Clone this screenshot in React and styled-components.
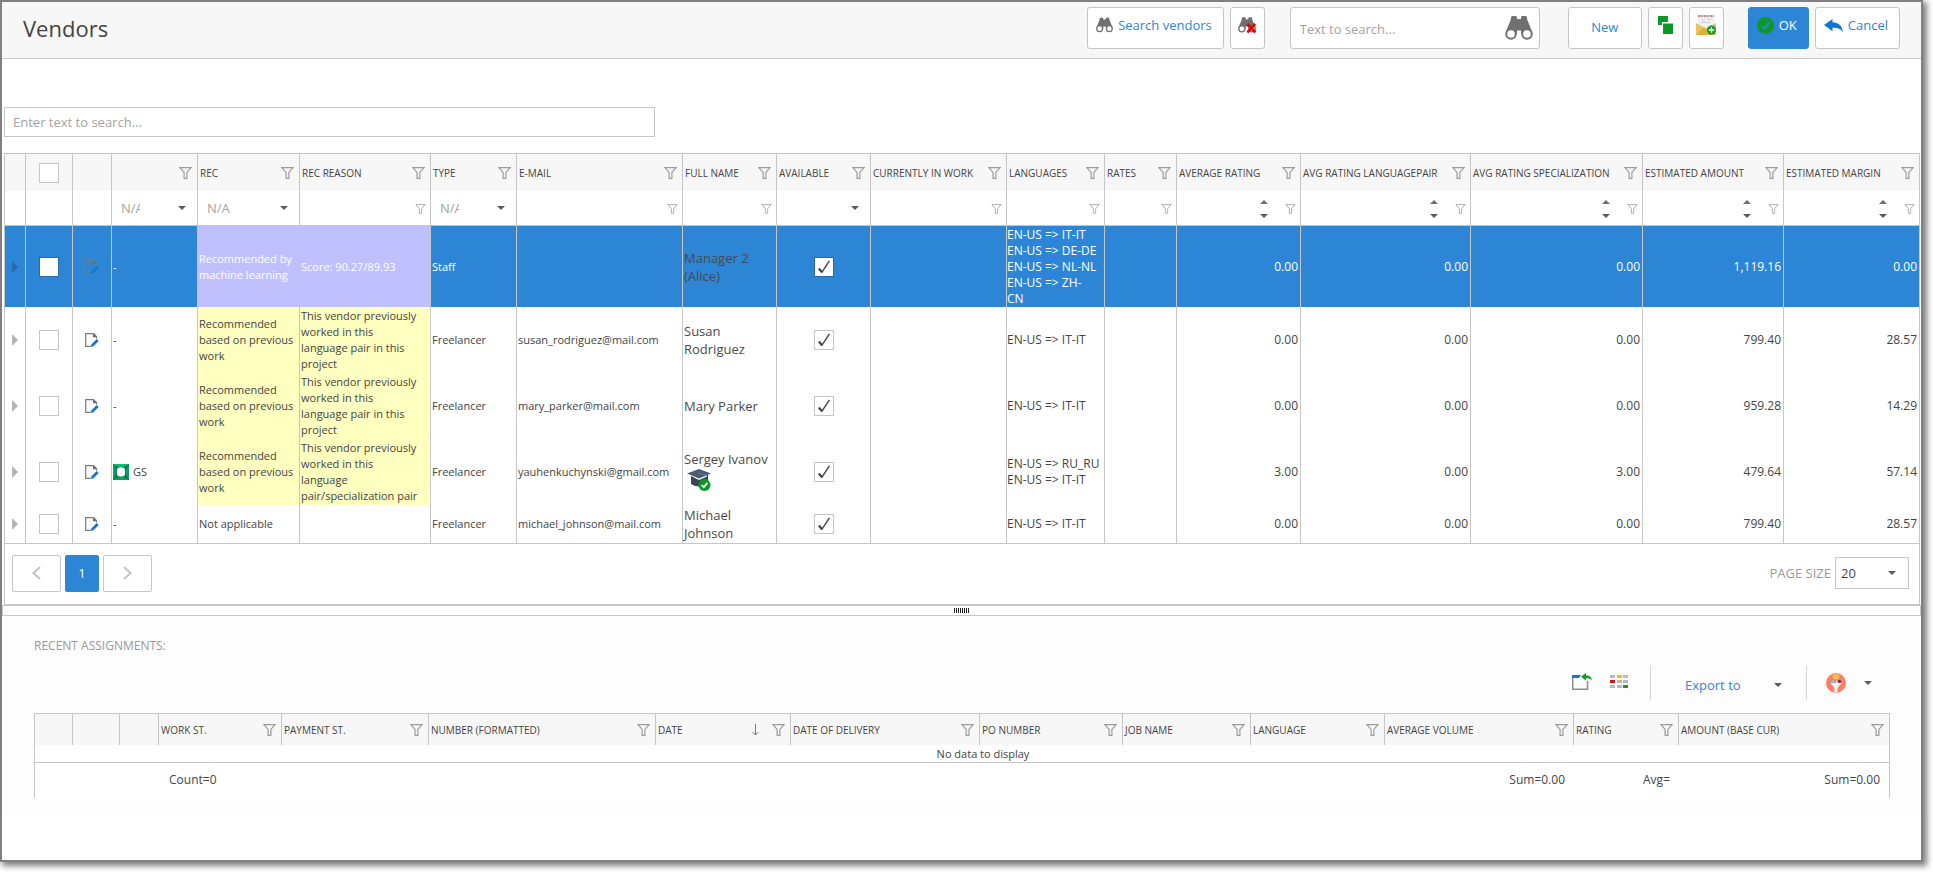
import React from "react";
import styled, { createGlobalStyle, css } from "styled-components";

const blue = "#2c86d5";
const line = "#c6c6c6";

// width, title, filter editor and alignment of every vendor column
const vendorColumns = [
  { width: 21, key: "expand" },
  { width: 47, key: "check" },
  { width: 39, key: "edit" },
  { width: 86, key: "status", title: "", filter: "select" },
  { width: 102, key: "rec", title: "REC", filter: "select" },
  { width: 131, key: "reason", title: "REC REASON", filter: "text" },
  { width: 86, key: "type", title: "TYPE", filter: "select" },
  { width: 166, key: "email", title: "E-MAIL", filter: "text" },
  { width: 94, key: "name", title: "FULL NAME", filter: "text" },
  { width: 94, key: "available", title: "AVAILABLE", filter: "blank" },
  { width: 136, key: "work", title: "CURRENTLY IN WORK", filter: "text" },
  { width: 98, key: "languages", title: "LANGUAGES", filter: "text" },
  { width: 72, key: "rates", title: "RATES", filter: "text" },
  { width: 124, key: "rating", title: "AVERAGE RATING", filter: "number" },
  { width: 170, key: "pair", title: "AVG RATING LANGUAGEPAIR", filter: "number" },
  { width: 172, key: "spec", title: "AVG RATING SPECIALIZATION", filter: "number" },
  { width: 141, key: "amount", title: "ESTIMATED AMOUNT", filter: "number" },
  { width: 136, key: "margin", title: "ESTIMATED MARGIN", filter: "number" },
];

const previousWork = ["Recommended", "based on previous", "work"];

const vendors = [
  {
    selected: true,
    height: 81,
    rec: ["Recommended by", "machine learning"],
    reason: ["Score: 90.27/89.93"],
    type: "Staff",
    email: "",
    name: ["Manager 2", "(Alice)"],
    languages: [
      "EN-US => IT-IT",
      "EN-US => DE-DE",
      "EN-US => NL-NL",
      "EN-US => ZH-",
      "CN",
    ],
    numbers: ["0.00", "0.00", "0.00", "1,119.16", "0.00"],
  },
  {
    height: 66,
    rec: previousWork,
    reason: [
      "This vendor previously",
      "worked in this",
      "language pair in this",
      "project",
    ],
    type: "Freelancer",
    email: "susan_rodriguez@mail.com",
    name: ["Susan", "Rodriguez"],
    languages: ["EN-US => IT-IT"],
    numbers: ["0.00", "0.00", "0.00", "799.40", "28.57"],
  },
  {
    height: 66,
    rec: previousWork,
    reason: [
      "This vendor previously",
      "worked in this",
      "language pair in this",
      "project",
    ],
    type: "Freelancer",
    email: "mary_parker@mail.com",
    name: ["Mary Parker"],
    languages: ["EN-US => IT-IT"],
    numbers: ["0.00", "0.00", "0.00", "959.28", "14.29"],
  },
  {
    height: 66,
    badge: "GS",
    rec: previousWork,
    reason: [
      "This vendor previously",
      "worked in this",
      "language",
      "pair/specialization pair",
    ],
    type: "Freelancer",
    email: "yauhenkuchynski@gmail.com",
    name: ["Sergey Ivanov"],
    certified: true,
    languages: ["EN-US => RU_RU", "EN-US => IT-IT"],
    numbers: ["3.00", "0.00", "3.00", "479.64", "57.14"],
  },
  {
    height: 39,
    plain: true,
    rec: ["Not applicable"],
    reason: [],
    type: "Freelancer",
    email: "michael_johnson@mail.com",
    name: ["Michael", "Johnson"],
    languages: ["EN-US => IT-IT"],
    numbers: ["0.00", "0.00", "0.00", "799.40", "28.57"],
  },
];

const assignmentColumns = [
  { width: 38 },
  { width: 47 },
  { width: 39 },
  { width: 123, title: "WORK ST.", total: "Count=0", left: true },
  { width: 147, title: "PAYMENT ST." },
  { width: 227, title: "NUMBER (FORMATTED)" },
  { width: 135, title: "DATE", sorted: true },
  { width: 189, title: "DATE OF DELIVERY" },
  { width: 143, title: "PO NUMBER" },
  { width: 128, title: "JOB NAME" },
  { width: 134, title: "LANGUAGE" },
  { width: 189, title: "AVERAGE VOLUME", total: "Sum=0.00" },
  { width: 105, title: "RATING", total: "Avg=" },
  { width: 211, title: "AMOUNT (BASE CUR)", total: "Sum=0.00" },
];

/* ---------- icons ---------- */

const FunnelIcon = ({ small }) => (
  <svg
    width={small ? 11 : 13}
    height={small ? 10 : 12}
    viewBox="0 0 13 12"
    fill="none"
    stroke={small ? "#b0b0b0" : "#9c9c9c"}
    strokeWidth="1.2"
  >
    <path d="M0.9 0.7H12.1L7.9 5.4V11.3H5.1V5.4Z" />
  </svg>
);

const CaretIcon = () => (
  <svg width="8" height="4" viewBox="0 0 8 4" fill="#5c5c5c">
    <path d="M0 0H8L4 4Z" />
  </svg>
);

const CaretUpIcon = () => (
  <svg width="8" height="4" viewBox="0 0 8 4" fill="#6e6e6e">
    <path d="M4 0L8 4H0Z" />
  </svg>
);

const BinocularsIcon = ({ width, height, crossed }) => (
  <svg width={width} height={height} viewBox="0 0 28 24">
    <path
      d="M6 1.5Q6 0 7.5 0H10.500Q12 0 12 1.500V3H16V1.500Q16 0 17.500 0H20.500Q22 0 22 1.500V3L27 15.500V18H16V14.500H12V18H1V15.500L6 3Z"
      fill="#707070"
    />
    <circle cx="6" cy="18" r="4.800" fill="#fff" stroke="#707070" strokeWidth="2" />
    <circle cx="22" cy="18" r="4.800" fill="#fff" stroke="#707070" strokeWidth="2" />
    {crossed && (
      <path d="M14.500 10.500L27 23.500M27 10.500L14.500 23.500" stroke="#e80000" strokeWidth="4.200" />
    )}
  </svg>
);

const CopyIcon = () => (
  <svg width="15" height="18" viewBox="0 0 15 18" fill="#0a9a24">
    <path d="M0 0H10V6H4V9H0Z" />
    <path d="M5 7.500H15V18H5Z" />
  </svg>
);

const MailAddIcon = () => (
  <svg width="20" height="20" viewBox="0 0 20 20">
    <path d="M2 2H18V14H2Z" fill="#f1f1f1" />
    <path d="M2 1H18" stroke="#e8523f" strokeWidth="1.600" strokeDasharray="2.500 3.500" />
    <path d="M5 1H18" stroke="#4aa3dc" strokeWidth="1.600" strokeDasharray="2.500 3.500" />
    <path d="M5 5H9M11 4.500H15M5 7.500H14" stroke="#cfcfcf" />
    <path d="M0 8L10 13.500L20 8V20H0Z" fill="#eec35c" />
    <path d="M0 20L8 12.500L10 13.500L18 20Z" fill="#e2ae3e" />
    <circle cx="15.500" cy="15" r="4.500" fill="#0a9a24" />
    <path d="M15.500 12.200V17.800M12.700 15H18.300" stroke="#fff" strokeWidth="1.400" />
  </svg>
);

const OkIcon = () => (
  <svg width="17" height="17" viewBox="0 0 17 17">
    <circle cx="8.500" cy="8.500" r="8.500" fill="#0a9a24" />
    <path d="M4.500 8.700L7.400 11.500L12.400 5.700" fill="none" stroke={blue} strokeWidth="2.200" />
  </svg>
);

const BackIcon = () => (
  <svg width="19" height="13" viewBox="0 0 19 13" fill="#1176d6">
    <path d="M8.500 0V3.300C14.500 3.500 18 6.500 19 13C16.500 9.600 13.500 8.600 8.500 8.700V12.200L0 6.100Z" />
  </svg>
);

const EditIcon = () => (
  <svg width="14" height="14" viewBox="0 0 14 14">
    <path
      d="M11.500 5.500V3.500L8.500 0.700H0.700V13.300H5.500"
      fill="none"
      stroke="#7a7a7a"
      strokeWidth="1.200"
    />
    <path d="M8 0.500L12 4.300H8Z" fill="#6a6a6a" />
    <path d="M5.500 14L6.300 11L8.600 13.200Z" fill="#1176d6" />
    <path d="M7.500 12.200L12.700 7" stroke="#1176d6" strokeWidth="2.800" />
  </svg>
);

const ExpandIcon = ({ dark }) => (
  <svg width="6" height="12" viewBox="0 0 6 12" fill={dark ? "#296aa6" : "#b4b4b4"}>
    <path d="M0 0L6 6L0 12Z" />
  </svg>
);

const TickIcon = () => (
  <svg width="12" height="14" viewBox="0 0 12 14" fill="none" stroke="#444">
    <path d="M0.800 8.600L4 12.200" strokeWidth="2.200" />
    <path d="M3.700 12.600L11.400 0.800" strokeWidth="1.400" />
  </svg>
);

const GradeIcon = () => (
  <svg width="16" height="16" viewBox="0 0 16 16">
    <rect width="16" height="16" fill="#0a9f63" />
    <path d="M0 0L8 4L16 0L12 8L16 16L8 12L0 16L4 8Z" fill="#0b7d4d" />
    <path d="M0 0L8 4L16 0Z" fill="#0fb874" />
    <rect x="4" y="3.500" width="8" height="9" rx="3" fill="#fff" />
  </svg>
);

const GraduateIcon = () => (
  <svg width="24" height="22" viewBox="0 0 24 22">
    <path d="M4 7L12 11L21 7V15Q12 20 4 15Z" fill="#3b4754" />
    <path d="M0 4.500L12 0L24 4.500L12 9.500Z" fill="#4e5b69" />
    <path d="M11 4L20 6" stroke="#2c86d5" strokeWidth="1.200" />
    <path d="M20.500 6V11" stroke="#3b4754" strokeWidth="1.200" />
    <circle cx="17.500" cy="16" r="6" fill="#0a9a24" />
    <path d="M14.700 16.200L16.800 18.200L20.500 13.800" fill="none" stroke="#fff" strokeWidth="1.800" />
  </svg>
);

const ChevronIcon = ({ next }) => (
  <svg width="9" height="14" viewBox="0 0 9 14" fill="none" stroke="#c4c4c4" strokeWidth="2">
    <path d={next ? "M1 1L7.500 7L1 13" : "M8 1L1.500 7L8 13"} />
  </svg>
);

const SortIcon = () => (
  <svg width="7" height="12" viewBox="0 0 7 12" fill="none" stroke="#777">
    <path d="M3.500 0V11M0.700 8L3.500 11L6.300 8" />
  </svg>
);

const OpenWindowIcon = () => (
  <svg width="20" height="18" viewBox="0 0 20 18">
    <path d="M0 2H9L7 5H0Z" fill="#1176d6" />
    <path d="M0.700 5V16.300H15.500V8" fill="none" stroke="#8b8b8b" strokeWidth="1.500" />
    <path d="M14 0V2.200C17.500 2.300 19.500 4 20 7.500C18.500 5.700 17 5.200 14 5.200V7.500L9 3.700Z" fill="#0a9a24" />
  </svg>
);

const ColumnsIcon = () => (
  <svg width="18" height="14" viewBox="0 0 18 14" fill="#b9b9b9">
    <rect width="5" height="3" />
    <rect x="7" width="5" height="3" fill="#fdb515" />
    <rect x="13" width="5" height="3" />
    <rect y="5" width="5" height="3" fill="#cf1417" />
    <rect x="7" y="5" width="5" height="3" />
    <rect x="13" y="5" width="5" height="3" />
    <rect y="10" width="5" height="3" />
    <rect x="7" y="10" width="5" height="3" />
    <rect x="13" y="10" width="5" height="3" fill="#0a9a24" />
  </svg>
);

const DataFilterIcon = () => (
  <svg width="20" height="20" viewBox="0 0 20 20">
    <circle cx="10" cy="10" r="10" fill="#ff7f66" />
    <path d="M4.500 10H15.500L11.500 15V19L8.500 20V15Z" fill="#f4f4f4" />
    <circle cx="10" cy="3.500" r="3.300" fill="#fbb946" />
    <path d="M5 10Q5 7 8 7L9.500 10Z" fill="#62c9ee" />
    <path d="M9.500 10L11 7L12 10Z" fill="#e8e8e8" />
    <circle cx="13.500" cy="8.300" r="1.600" fill="#39455a" />
  </svg>
);

/* ---------- small parts ---------- */

const Lines = ({ items }) =>
  items.map((text, i) => (
    <React.Fragment key={i}>
      {i > 0 && <br />}
      {text}
    </React.Fragment>
  ));

const CheckBox = ({ label, checked, selected }) => (
  <CheckWrap>
    <CheckInput
      type="checkbox"
      aria-label={label}
      defaultChecked={checked}
      $selected={selected}
    />
    {checked && <TickIcon />}
  </CheckWrap>
);

const HeaderCell = ({ column, table }) => (
  <HeadCell scope="col">
    {column.title !== undefined && (
      <HeadContent>
        <HeadTitle>{column.title}</HeadTitle>
        {column.sorted && <SortIcon />}
        <IconButton aria-label={`Filter ${table} ${column.title}`}>
          <FunnelIcon />
        </IconButton>
      </HeadContent>
    )}
  </HeadCell>
);

const FilterEditor = ({ column }) => {
  const label = `${column.title} filter`;
  if (column.filter === "select" || column.filter === "blank") {
    return (
      <SelectWrap>
        <FilterSelect aria-label={label}>
          <option>{column.filter === "select" ? "N/A" : ""}</option>
        </FilterSelect>
        <CaretIcon />
      </SelectWrap>
    );
  }
  return (
    <FilterBox>
      <FilterInput type="text" aria-label={label} />
      {column.filter === "number" && (
        <Spinner>
          <IconButton aria-label={`Increase ${label}`}>
            <CaretUpIcon />
          </IconButton>
          <IconButton aria-label={`Decrease ${label}`}>
            <CaretIcon />
          </IconButton>
        </Spinner>
      )}
      <IconButton aria-label={`${label} condition`}>
        <FunnelIcon small />
      </IconButton>
    </FilterBox>
  );
};

const VendorRow = ({ vendor }) => {
  const { selected, plain } = vendor;
  const tint = plain ? "none" : selected ? "#c0c0ff" : "#ffffc0";
  const who = vendor.name.join(" ");
  return (
    <Row $selected={selected} $height={vendor.height}>
      <Cell $center>
        <IconButton aria-label={`Expand ${who}`}>
          <ExpandIcon dark={selected} />
        </IconButton>
      </Cell>
      <Cell $center>
        <CheckBox label={`Select ${who}`} selected={selected} />
      </Cell>
      <Cell $center>
        <IconButton aria-label={`Edit ${who}`}>
          <EditIcon />
        </IconButton>
      </Cell>
      <Cell>
        {vendor.badge ? (
          <Badge>
            <GradeIcon />
            {vendor.badge}
          </Badge>
        ) : (
          "-"
        )}
      </Cell>
      <Cell $tint={tint}>
        <Lines items={vendor.rec} />
      </Cell>
      <Cell $tint={tint}>
        <Lines items={vendor.reason} />
      </Cell>
      <Cell>{vendor.type}</Cell>
      <Cell>{vendor.email}</Cell>
      <NameCell>
        <Lines items={vendor.name} />
        {vendor.certified && (
          <Certificate>
            <GraduateIcon />
          </Certificate>
        )}
      </NameCell>
      <Cell $center>
        <CheckBox label={`${who} available`} checked selected={selected} />
      </Cell>
      <Cell />
      <LanguageCell>
        <Lines items={vendor.languages} />
      </LanguageCell>
      <Cell />
      {vendor.numbers.map((value, i) => (
        <NumberCell key={i}>{value}</NumberCell>
      ))}
    </Row>
  );
};

export default function App() {
  return (
    <>
      <GlobalStyle />
      <Window>
        <TopBar>
          <Title>Vendors</Title>
          <Group>
            <Button>
              <BinocularsIcon width={17} height={16} />
              Search vendors
            </Button>
            <Button $square aria-label="Clear vendor search">
              <BinocularsIcon width={18} height={16} crossed />
            </Button>
          </Group>
          <SearchBox>
            <SearchInput aria-label="Search" placeholder="Text to search..." />
            <IconButton aria-label="Run search">
              <BinocularsIcon width={28} height={24} />
            </IconButton>
          </SearchBox>
          <Group>
            <Button $wide>New</Button>
            <Button $square aria-label="Copy">
              <CopyIcon />
            </Button>
            <Button $square aria-label="New mail">
              <MailAddIcon />
            </Button>
          </Group>
          <Group>
            <Button $primary>
              <OkIcon />
              OK
            </Button>
            <Button>
              <BackIcon />
              Cancel
            </Button>
          </Group>
        </TopBar>

        <Main>
          <GridSearch aria-label="Search in list" placeholder="Enter text to search..." />
          <Panel>
            <Table>
              <colgroup>
                {vendorColumns.map((c) => (
                  <Col key={c.key} $width={c.width} />
                ))}
              </colgroup>
              <thead>
                <HeadRow $height={37}>
                  {vendorColumns.map((c) =>
                    c.key === "check" ? (
                      <CheckHeadCell key={c.key} scope="col">
                        <CheckBox label="Select all" />
                      </CheckHeadCell>
                    ) : (
                      <HeaderCell key={c.key} column={c} table="vendors" />
                    )
                  )}
                </HeadRow>
                <FilterRow>
                  {vendorColumns.map((c) => (
                    <FilterCell key={c.key}>
                      {c.filter && <FilterEditor column={c} />}
                    </FilterCell>
                  ))}
                </FilterRow>
              </thead>
              <tbody>
                {vendors.map((v) => (
                  <VendorRow key={v.name[0]} vendor={v} />
                ))}
              </tbody>
            </Table>
            <Pager>
              <PageButton aria-label="Previous page">
                <ChevronIcon />
              </PageButton>
              <PageButton $current>1</PageButton>
              <PageButton aria-label="Next page">
                <ChevronIcon next />
              </PageButton>
              <PageLabel htmlFor="page-size">PAGE SIZE</PageLabel>
              <PageSizeWrap>
                <PageSize id="page-size">
                  <option>20</option>
                </PageSize>
                <CaretIcon />
              </PageSizeWrap>
            </Pager>
          </Panel>
        </Main>

        <Splitter>
          <Grip />
        </Splitter>

        <Recent>
          <RecentTitle>RECENT ASSIGNMENTS:</RecentTitle>
          <Tools>
            <ToolSet>
              <IconButton aria-label="Open in window">
                <OpenWindowIcon />
              </IconButton>
              <IconButton aria-label="Choose columns">
                <ColumnsIcon />
              </IconButton>
            </ToolSet>
            <ExportButton>
              Export to
              <CaretIcon />
            </ExportButton>
            <FilterMenu aria-label="Saved filters">
              <DataFilterIcon />
              <CaretIcon />
            </FilterMenu>
          </Tools>
          <AssignmentPanel>
            <Table>
              <colgroup>
                {assignmentColumns.map((c, i) => (
                  <Col key={i} $width={c.width} />
                ))}
              </colgroup>
              <thead>
                <HeadRow $height={31}>
                  {assignmentColumns.map((c, i) => (
                    <HeaderCell key={i} column={c} table="assignments" />
                  ))}
                </HeadRow>
              </thead>
              <tbody>
                <tr>
                  <EmptyCell colSpan={assignmentColumns.length}>
                    No data to display
                  </EmptyCell>
                </tr>
              </tbody>
              <tfoot>
                <tr>
                  {assignmentColumns.map((c, i) => (
                    <TotalCell key={i} $left={c.left}>
                      {c.total}
                    </TotalCell>
                  ))}
                </tr>
              </tfoot>
            </Table>
          </AssignmentPanel>
        </Recent>
      </Window>
    </>
  );
}

/* ---------- styles ---------- */

const GlobalStyle = createGlobalStyle`
  * {
    box-sizing: border-box;
  }

  body {
    margin: 0;
    background: white;
    color: #444;
    font-family: "Open Sans", "Noto Sans", sans-serif;
    font-size: 11px;
    line-height: 16px;
  }

  button, input, select {
    font-family: inherit;
    color: inherit;
  }

  svg {
    display: block;
    flex: none;
  }
`;

const Window = styled.div`
  min-height: calc(100vh - 10px);
  margin: 0 10px 10px 0;
  border: 2px solid #808080;
  box-shadow: 3px 3px 6px 1px rgba(0, 0, 0, 0.5);
  background: white;
`;

const TopBar = styled.header`
  display: flex;
  align-items: flex-start;
  height: 57px;
  padding: 5px 21px 0 21px;
  border-bottom: 1px solid ${line};
  background: #f7f7f7;
`;

const Title = styled.h1`
  flex: 1;
  margin: 0;
  font-size: 22px;
  font-weight: 400;
  line-height: 42px;
`;

const Group = styled.div`
  display: flex;
  gap: 6px;
`;

const Button = styled.button`
  display: flex;
  align-items: center;
  justify-content: center;
  gap: 5px;
  height: 42px;
  padding: 0 11px 6px 8px;
  border: 1px solid ${line};
  border-radius: 3px;
  background: white;
  color: ${blue};
  font-size: 13px;
  line-height: 20px;

  ${(props) =>
    props.$square &&
    css`
      width: 35px;
      padding: 0 0 6px;
    `}
  ${(props) =>
    props.$wide &&
    css`
      width: 74px;
      padding: 0 0 2px;
    `}
  ${(props) =>
    props.$primary &&
    css`
      border-color: ${blue};
      background: ${blue};
      color: white;
    `}
`;

const IconButton = styled.button`
  padding: 0;
  border: 0;
  background: none;
`;

const SearchBox = styled.div`
  display: flex;
  align-items: center;
  width: 250px;
  height: 42px;
  margin: 0 28px 0 25px;
  padding: 0 6px 0 9px;
  border: 1px solid ${line};
  border-radius: 3px;
  background: white;

  & + ${Group} {
    margin-right: 24px;
  }
`;

const inputText = css`
  border: 0;
  outline: 0;
  background: none;
  font-size: 13px;

  &::placeholder {
    color: #a2a2a2;
  }
`;

const SearchInput = styled.input`
  ${inputText}
  flex: 1;
  min-width: 0;
  padding: 1px 0 0;
`;

const Main = styled.main`
  padding: 48px 1px 0 2px;
`;

const GridSearch = styled.input`
  ${inputText}
  display: block;
  width: 34%;
  height: 30px;
  margin-bottom: 16px;
  padding: 0 8px;
  border: 1px solid ${line};
`;

const Panel = styled.section`
  border: 1px solid ${line};
  border-right: 0;
`;

const Table = styled.table`
  width: 100%;
  table-layout: fixed;
  border-collapse: separate;
  border-spacing: 0;
`;

const Col = styled.col`
  width: ${(props) => props.$width}px;
`;

const HeadRow = styled.tr`
  height: ${(props) => props.$height}px;
  background: #f7f7f7;
`;

const HeadCell = styled.th`
  padding: 0 5px 0 2px;
  border-right: 1px solid ${line};
  font-size: 10px;
  font-weight: 400;
  text-align: left;
  white-space: nowrap;
`;

const CheckHeadCell = styled(HeadCell)`
  padding: 0;
`;

const HeadContent = styled.div`
  display: flex;
  align-items: center;
  gap: 13px;
`;

const HeadTitle = styled.span`
  flex: 1;
  min-width: 0;
`;

const FilterRow = styled.tr`
  height: 35px;
`;

const FilterCell = styled.td`
  padding: 0;
  border-right: 1px solid ${line};
  border-bottom: 1px solid ${line};
`;

const FilterBox = styled.div`
  display: flex;
  align-items: center;
  padding: 2px 4px 0 2px;
`;

const FilterInput = styled.input`
  ${inputText}
  flex: 1;
  min-width: 0;
  height: 22px;
  padding: 0;
`;

const Spinner = styled.div`
  display: grid;
  gap: 10px;
  margin-right: 17px;
`;

const SelectWrap = styled.div`
  display: grid;
  align-items: center;

  select,
  svg {
    grid-area: 1 / 1;
  }

  svg {
    justify-self: end;
    margin-right: 11px;
    pointer-events: none;
  }
`;

const FilterSelect = styled.select`
  appearance: none;
  width: 100%;
  height: 30px;
  padding: 0 57px 0 9px;
  border: 0;
  background: none;
  color: #a2a2a2;
  font-size: 13px;
  overflow: hidden;
`;

const Row = styled.tr`
  height: ${(props) => props.$height}px;
  background: ${(props) => (props.$selected ? blue : "white")};
  color: ${(props) => (props.$selected ? "white" : "inherit")};
`;

const Cell = styled.td`
  padding: 0 2px 0 1px;
  border-right: 1px solid ${line};
  background: ${(props) => props.$tint || "none"};
  white-space: nowrap;

  ${(props) =>
    props.$center &&
    css`
      padding: 0;

      > * {
        margin: 0 auto;
        display: block;
      }
    `}

  tr:last-child > & {
    border-bottom: 1px solid ${line};
  }
`;

const NameCell = styled(Cell)`
  color: #4a4a4a;
  font-size: 13px;
  line-height: 18px;
`;

const LanguageCell = styled(Cell)`
  padding: 0;
  font-size: 12px;
`;

const NumberCell = styled(Cell)`
  font-size: 12px;
  text-align: right;
`;

const Certificate = styled.div`
  padding: 1px 0 4px 3px;
`;

const Badge = styled.div`
  display: flex;
  gap: 4px;
`;

const CheckWrap = styled.span`
  display: grid;
  place-items: center;
  width: 20px;
  margin: 0 auto;

  ${Cell} > & {
    display: grid;
  }

  input,
  svg {
    grid-area: 1 / 1;
  }

  svg {
    pointer-events: none;
  }
`;

const CheckInput = styled.input`
  appearance: none;
  width: 20px;
  height: 20px;
  margin: 0;
  border: 1px solid ${(props) => (props.$selected ? "#2a69a5" : line)};
  background: white;
`;

const Pager = styled.nav`
  display: flex;
  align-items: center;
  gap: 4px;
  height: 60px;
  padding: 0 10px 2px 7px;
  border-right: 1px solid ${line};
`;

const PageButton = styled.button`
  display: grid;
  place-items: center;
  width: ${(props) => (props.$current ? 34 : 49)}px;
  height: 37px;
  padding: 0;
  border: 1px solid ${(props) => (props.$current ? blue : line)};
  border-radius: 2px;
  background: ${(props) => (props.$current ? blue : "white")};
  color: white;
  font-size: 13px;
`;

const PageLabel = styled.label`
  margin-left: auto;
  color: #999;
  font-size: 13px;
`;

const PageSizeWrap = styled(SelectWrap)`
  width: 74px;

  svg {
    margin-right: 13px;
  }
`;

const PageSize = styled.select`
  appearance: none;
  height: 32px;
  padding: 0 5px;
  border: 1px solid ${line};
  background: white;
  font-size: 13px;
`;

const Splitter = styled.div`
  display: grid;
  place-items: center;
  height: 11px;
  border: 1px solid ${line};
`;

const Grip = styled.div`
  width: 15px;
  height: 5px;
  background: repeating-linear-gradient(90deg, #222 0 1px, transparent 1px 2px);
`;

const Recent = styled.section`
  padding: 21px 31px 16px 32px;
  background: #fdfdfd;
`;

const RecentTitle = styled.h2`
  margin: 0;
  color: #999;
  font-size: 12px;
  font-weight: 400;
  line-height: 18px;
`;

const Tools = styled.div`
  display: flex;
  justify-content: flex-end;
  height: 34px;
  margin: 11px 0 13px;
  padding-right: 18px;
`;

const ToolSet = styled.div`
  display: flex;
  align-items: center;
  gap: 18px;
  padding: 0 22px 2px 0;
`;

const ExportButton = styled.button`
  display: flex;
  align-items: center;
  justify-content: space-between;
  width: 157px;
  padding: 4px 24px 0 34px;
  border: solid #d5d5d5;
  border-width: 0 1px;
  background: none;
  color: ${blue};
  font-size: 13px;
`;

const FilterMenu = styled.button`
  display: flex;
  align-items: center;
  gap: 18px;
  padding: 0 0 0 19px;
  border: 0;
  background: none;
`;

const AssignmentPanel = styled.div`
  border: 1px solid ${line};
  border-width: 1px 0 0 1px;
  background: white;
`;

const EmptyCell = styled.td`
  height: 18px;
  padding: 0 0 0 42px;
  border: solid ${line};
  border-width: 0 1px 1px 0;
  text-align: center;
`;

const TotalCell = styled.td`
  height: 35px;
  padding: 0 9px 2px 10px;
  font-size: 12px;
  text-align: ${(props) => (props.$left ? "left" : "right")};

  &:last-child {
    border-right: 1px solid ${line};
  }
`;
